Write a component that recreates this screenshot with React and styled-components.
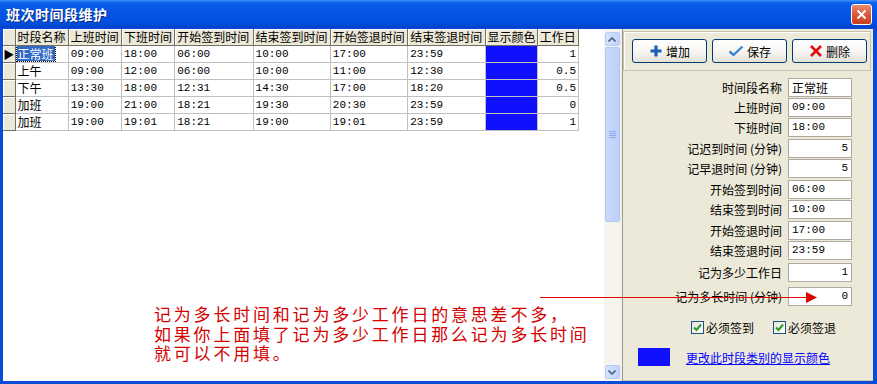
import styled, { createGlobalStyle } from 'styled-components'

const GlobalStyle = createGlobalStyle`
  body {
    margin: 0;
    overflow: hidden;
    font-family: "Noto Sans CJK SC", "Liberation Sans", sans-serif;
    font-size: 12px;
  }
`

const CJK = `"Noto Sans CJK SC", "Liberation Sans", sans-serif`
const MONO = `"Liberation Mono", "Noto Sans CJK SC", monospace`

const Window = styled.div`
  position: relative;
  width: 877px;
  height: 384px;
  display: flex;
  flex-direction: column;
  background: #0a4bd8;
  overflow: hidden;
`

const TitleBar = styled.div`
  height: 28px;
  display: flex;
  align-items: center;
  padding: 0 5px 0 6px;
  background: linear-gradient(to bottom, #3d95ff 0%, #0a5fe8 10%, #0454e6 45%, #0350e0 80%, #0242c8 100%);
`

const Title = styled.span`
  color: #fff;
  font-family: ${CJK};
  font-size: 14px;
  font-weight: 700;
  text-shadow: 1px 1px 0 #0a2a80;
  letter-spacing: 0.5px;
`

const CloseButton = styled.div`
  margin-left: auto;
  width: 19px;
  height: 19px;
  border: 1px solid #fff;
  border-radius: 3px;
  background: linear-gradient(to bottom, #e98a6e 0%, #d9583a 50%, #c4401e 100%);
  display: flex;
  align-items: center;
  justify-content: center;
`

const Body = styled.div`
  flex: 1;
  display: flex;
  padding: 1px 4px 3px 3px;
  background: #0a4bd8;
  min-height: 0;
`

const GridPane = styled.div`
  position: relative;
  width: 601px;
  background: #fff;
`

const Table = styled.table`
  border-collapse: collapse;
  table-layout: fixed;
  width: 576px;
`

const HeadCell = styled.th`
  height: 16px;
  padding: 0 0 0 2px;
  background: #ece9d8;
  border-right: 1px solid #716f64;
  border-bottom: 1px solid #716f64;
  box-shadow: inset 1px 1px 0 #fff;
  font-family: ${CJK};
  font-size: 12px;
  font-weight: 400;
  text-align: left;
  white-space: nowrap;
  overflow: hidden;
  line-height: 16px;
`

const Indicator = styled.td`
  height: 16px;
  padding: 0;
  background: #ece9d8;
  border-right: 1px solid #716f64;
  border-bottom: 1px solid #716f64;
  box-shadow: inset 1px 1px 0 #fff;
  font-size: 11px;
  line-height: 16px;
  text-align: center;
`

const Cell = styled.td`
  height: 16px;
  padding: 0 2px;
  border-right: 1px solid #c0c0c0;
  border-bottom: 1px solid #c0c0c0;
  font-family: ${(p) => (p.$cjk ? CJK : MONO)};
  font-size: ${(p) => (p.$cjk ? '12px' : '11px')};
  line-height: 16px;
  text-align: ${(p) => (p.$num ? 'right' : 'left')};
  white-space: nowrap;
  overflow: hidden;
`

const SelectedText = styled.span`
  display: inline-block;
  background: #316ac5;
  color: #fff;
  outline: 1px dotted #000;
  padding: 0 1px;
  margin-left: -1px;
  line-height: 15px;
`

const ColorCell = styled.td`
  padding: 0;
  border-right: 1px solid #c0c0c0;
  border-bottom: 1px solid #c0c0c0;
  background: #1010ff;
`

const Scrollbar = styled.div`
  width: 16px;
  display: flex;
  flex-direction: column;
  align-items: center;
  padding: 3px 0 2px;
  background: #f5f4ee;
  box-sizing: border-box;
`

const ScrollButton = styled.div`
  width: 15px;
  height: 14px;
  box-sizing: border-box;
  border: 1px solid #b8cbf6;
  border-radius: 2px;
  background: linear-gradient(to right, #d6e2fd, #c2d3fb);
  display: flex;
  align-items: center;
  justify-content: center;
`

const Thumb = styled.div`
  margin-top: 1px;
  width: 15px;
  height: 175px;
  box-sizing: border-box;
  border: 1px solid #b3c7f5;
  border-radius: 2px;
  background: linear-gradient(to right, #cbd9fc, #bdd0fa);
  display: flex;
  align-items: center;
  justify-content: center;
`

const Track = styled.div`
  flex: 1;
`

const Splitter = styled.div`
  width: 2px;
  background: #f0efe9;
  border-right: 1px solid #9a9a90;
`

const RightPanel = styled.div`
  flex: 1;
  display: flex;
  flex-direction: column;
  background: #ece9d8;
  border-bottom: 1px solid #c8c5b4;
`

const ButtonGroup = styled.div`
  margin: 2px 2px 0 0;
  padding: 7px 0 0 8px;
  box-sizing: border-box;
  height: 40px;
  border: 1px solid #c5c2b2;
  box-shadow: inset 1px 1px 0 #fff;
  display: flex;
  gap: 5px;
`

const Button = styled.button`
  width: 75px;
  height: 24px;
  padding: 0;
  border: 1px solid #003c74;
  border-radius: 3px;
  background: linear-gradient(to bottom, #ffffff 0%, #f4f3ee 60%, #e3e1d6 100%);
  display: flex;
  align-items: center;
  justify-content: center;
  gap: 3px;
  font-family: ${CJK};
  font-size: 12px;
  color: #000;
`

const Form = styled.div`
  display: flex;
  flex-direction: column;
  margin-top: 7px;
`

const Row = styled.div`
  display: grid;
  grid-template-columns: 159px 64px;
  column-gap: 6px;
  height: 19px;
  margin-top: ${(p) => p.$mt}px;
  align-items: center;
`

const Label = styled.span`
  text-align: right;
  font-family: ${CJK};
  font-size: 12px;
  white-space: nowrap;
`

const Input = styled.div`
  height: 19px;
  box-sizing: border-box;
  border: 1px solid #aeaaa0;
  background: #fff;
  padding: 0 3px;
  font-family: ${(p) => (p.$cjk ? CJK : MONO)};
  font-size: ${(p) => (p.$cjk ? '12px' : '11px')};
  line-height: 17px;
  text-align: ${(p) => (p.$num ? 'right' : 'left')};
`

const CheckRow = styled.div`
  display: flex;
  gap: 19px;
  margin-top: 14px;
  padding-left: 68px;
  height: 14px;
  align-items: center;
`

const CheckItem = styled.label`
  display: flex;
  align-items: center;
  gap: 2px;
  font-family: ${CJK};
  font-size: 12px;
`

const Box = styled.span`
  width: 13px;
  height: 13px;
  box-sizing: border-box;
  border: 1px solid #1c5180;
  background: linear-gradient(135deg, #e4e3dd, #fff);
  display: flex;
  align-items: center;
  justify-content: center;
`

const ColorRow = styled.div`
  display: flex;
  align-items: center;
  gap: 16px;
  margin-top: 14px;
  padding-left: 15px;
`

const Swatch = styled.div`
  width: 32px;
  height: 18px;
  background: #1010ff;
`

const Link = styled.span`
  color: #0000ff;
  text-decoration: underline;
  font-family: ${CJK};
  font-size: 12px;
`

const Note = styled.div`
  position: absolute;
  left: 151px;
  top: 275px;
  display: flex;
  flex-direction: column;
`

const NoteLine = styled.div`
  height: 19.5px;
  color: #d40000;
  font-family: ${CJK};
  font-size: 17px;
  line-height: 19.5px;
  letter-spacing: 2.8px;
  white-space: nowrap;
`

const ArrowLayer = styled.svg`
  position: absolute;
  left: 0;
  top: 0;
  pointer-events: none;
`

const columns = [
  ['时段名称', 53],
  ['上班时间', 53],
  ['下班时间', 53],
  ['开始签到时间', 78],
  ['结束签到时间', 77],
  ['开始签退时间', 77],
  ['结束签退时间', 77],
  ['显示颜色', 52],
  ['工作日', 41],
]

const rows = [
  ['正常班', '09:00', '18:00', '06:00', '10:00', '17:00', '23:59', '1'],
  ['上午', '09:00', '12:00', '06:00', '10:00', '11:00', '12:30', '0.5'],
  ['下午', '13:30', '18:00', '12:31', '14:30', '17:00', '18:20', '0.5'],
  ['加班', '19:00', '21:00', '18:21', '19:30', '20:30', '23:59', '0'],
  ['加班', '19:00', '19:01', '18:21', '19:00', '19:01', '23:59', '1'],
]

const fields = [
  ['时间段名称', '正常班', 0, { $cjk: true }],
  ['上班时间', '09:00', 1],
  ['下班时间', '18:00', 1],
  ['记迟到时间 (分钟)', '5', 2, { $num: true }],
  ['记早退时间 (分钟)', '5', 1, { $num: true }],
  ['开始签到时间', '06:00', 2],
  ['结束签到时间', '10:00', 1],
  ['开始签退时间', '17:00', 2],
  ['结束签退时间', '23:59', 1],
  ['记为多少工作日', '1', 3, { $num: true }],
  ['记为多长时间 (分钟)', '0', 5, { $num: true }],
]

const notes = [
  '记为多长时间和记为多少工作日的意思差不多，',
  '如果你上面填了记为多少工作日那么记为多长时间',
  '就可以不用填。',
]

const Check = () => (
  <Box>
    <svg width="9" height="9" viewBox="0 0 9 9">
      <path d="M1 4.5 L3.5 7 L8 1.5" fill="none" stroke="#21a121" strokeWidth="2" />
    </svg>
  </Box>
)

const App = () => {
  return (
    <>
      <GlobalStyle />
      <Window>
        <TitleBar>
          <Title>班次时间段维护</Title>
          <CloseButton>
            <svg width="11" height="11" viewBox="0 0 11 11">
              <path d="M1.5 1.5 L9.5 9.5 M9.5 1.5 L1.5 9.5" stroke="#fff" strokeWidth="2" />
            </svg>
          </CloseButton>
        </TitleBar>
        <Body>
          <GridPane>
            <Table>
              <colgroup>
                <col style={{ width: 12 }} />
                {columns.map(([name, w]) => (
                  <col key={name} style={{ width: w }} />
                ))}
              </colgroup>
              <thead>
                <tr>
                  <HeadCell />
                  {columns.map(([name]) => (
                    <HeadCell key={name}>{name}</HeadCell>
                  ))}
                </tr>
              </thead>
              <tbody>
                {rows.map((r, i) => (
                  <tr key={i}>
                    <Indicator>{i === 0 ? '▶' : ''}</Indicator>
                    <Cell $cjk>{i === 0 ? <SelectedText>{r[0]}</SelectedText> : r[0]}</Cell>
                    {r.slice(1, 7).map((v, j) => (
                      <Cell key={j}>{v}</Cell>
                    ))}
                    <ColorCell />
                    <Cell $num>{r[7]}</Cell>
                  </tr>
                ))}
              </tbody>
            </Table>
            <Note>
              {notes.map((t) => (
                <NoteLine key={t}>{t}</NoteLine>
              ))}
            </Note>
          </GridPane>
          <Scrollbar>
            <ScrollButton>
              <svg width="8" height="5" viewBox="0 0 8 5">
                <path d="M0.5 4.5 L4 1 L7.5 4.5" fill="none" stroke="#4d6185" strokeWidth="1.6" />
              </svg>
            </ScrollButton>
            <Thumb>
              <svg width="7" height="8" viewBox="0 0 7 8">
                <path d="M0 0.5 H7 M0 2.5 H7 M0 4.5 H7 M0 6.5 H7" stroke="#8ea8e8" strokeWidth="1" />
              </svg>
            </Thumb>
            <Track />
            <ScrollButton>
              <svg width="8" height="5" viewBox="0 0 8 5">
                <path d="M0.5 0.5 L4 4 L7.5 0.5" fill="none" stroke="#4d6185" strokeWidth="1.6" />
              </svg>
            </ScrollButton>
          </Scrollbar>
          <Splitter />
          <RightPanel>
            <ButtonGroup>
              <Button>
                <svg width="14" height="14" viewBox="0 0 14 14">
                  <path d="M7 1.5 V12.5 M1.5 7 H12.5" stroke="#1d5fb8" strokeWidth="3.2" />
                </svg>
                增加
              </Button>
              <Button>
                <svg width="16" height="12" viewBox="0 0 16 12">
                  <path d="M1.5 6.5 L5.5 10 L14.5 1.5" fill="none" stroke="#3a82d6" strokeWidth="2.4" />
                </svg>
                保存
              </Button>
              <Button>
                <svg width="14" height="14" viewBox="0 0 14 14">
                  <path d="M2 2 L12 12 M12 2 L2 12" stroke="#e01010" strokeWidth="2.6" />
                </svg>
                删除
              </Button>
            </ButtonGroup>
            <Form>
              {fields.map(([label, value, mt, props]) => (
                <Row key={label} $mt={mt}>
                  <Label>{label}</Label>
                  <Input {...(props || {})}>{value}</Input>
                </Row>
              ))}
            </Form>
            <CheckRow>
              <CheckItem>
                <Check />
                必须签到
              </CheckItem>
              <CheckItem>
                <Check />
                必须签退
              </CheckItem>
            </CheckRow>
            <ColorRow>
              <Swatch />
              <Link>更改此时段类别的显示颜色</Link>
            </ColorRow>
          </RightPanel>
        </Body>
        <ArrowLayer width="877" height="384">
          <line x1="540" y1="297.5" x2="808" y2="297.5" stroke="#e00000" strokeWidth="1" />
          <path d="M806 292 L817 297.5 L806 303 Z" fill="#e00000" />
        </ArrowLayer>
      </Window>
    </>
  )
}

export default App
